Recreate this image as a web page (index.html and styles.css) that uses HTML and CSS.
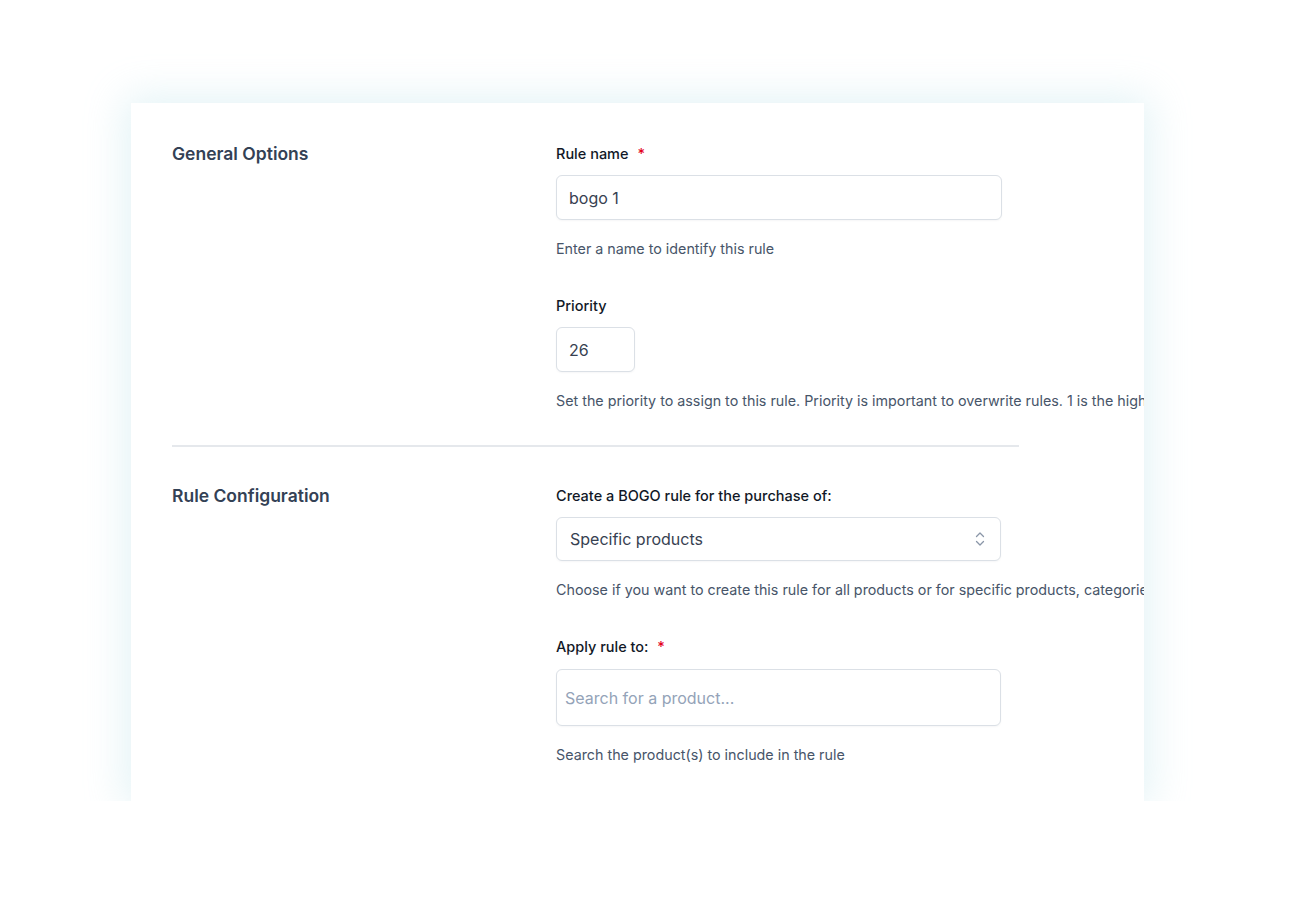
FILE: index.html
```html
<!DOCTYPE html>
<html lang="en">
<head>
<meta charset="utf-8">
<title>BOGO rule</title>
<link rel="stylesheet" href="styles.css">
</head>
<body>
<div class="card">
  <div class="inner">
    <section class="section">
      <h2 class="section-title">General Options</h2>
      <div class="fields">
        <div class="field">
          <label class="label">Rule name <span class="req">*</span></label>
          <div class="input input-wide"><span class="value">bogo 1</span></div>
          <p class="help">Enter a name to identify this rule</p>
        </div>
        <div class="field">
          <label class="label">Priority</label>
          <div class="input input-small"><span class="value">26</span></div>
          <p class="help">Set the priority to assign to this rule. Priority is important to overwrite rules. 1 is the highest priority.</p>
        </div>
      </div>
    </section>
    <hr class="divider">
    <section class="section">
      <h2 class="section-title">Rule Configuration</h2>
      <div class="fields">
        <div class="field">
          <label class="label">Create a BOGO rule for the purchase of:</label>
          <div class="input input-select">
            <span class="value">Specific products</span>
            <svg class="chev" width="10" height="16" viewBox="0 0 10 16" fill="none" stroke="#8a96a8" stroke-width="1.3" stroke-linecap="round" stroke-linejoin="round"><path d="M1.5 5.5 L5 2 L8.5 5.5"/><path d="M1.5 10.5 L5 14 L8.5 10.5"/></svg>
          </div>
          <p class="help">Choose if you want to create this rule for all products or for specific products, categories or tags.</p>
        </div>
        <div class="field">
          <label class="label">Apply rule to: <span class="req">*</span></label>
          <div class="input input-search"><span class="placeholder">Search for a product...</span></div>
          <p class="help">Search the product(s) to include in the rule</p>
        </div>
      </div>
    </section>
  </div>
</div>
</body>
</html>
```

FILE: styles.css
```css
* { box-sizing: border-box; }
html, body { margin: 0; padding: 0; background: #ffffff; }
body {
  font-family: Inter, "Noto Sans", "Liberation Sans", sans-serif;
  padding: 103px 0 0 131px;
}
.card {
  width: 1013px;
  background: #ffffff;
  overflow: hidden;
  padding: 41px 0 36px 41px;
  box-shadow: 0 0 38px 6px rgba(170, 218, 228, 0.33);
}
.inner { width: 847px; }
.section {
  display: grid;
  grid-template-columns: 384px 1fr;
}
.section-title {
  margin: 0;
  font-size: 17.5px;
  line-height: 20px;
  font-weight: 560;
  color: #334155;
}
.fields { display: flex; flex-direction: column; gap: 37px; }
.field { display: flex; flex-direction: column; align-items: flex-start; }
.label {
  font-size: 14.5px;
  line-height: 20px;
  font-weight: 470;
  color: #111827;
}
.req { color: #e3001b; margin-left: 5px; }
.input {
  margin-top: 11px;
  border: 1px solid #dbe0e6;
  border-radius: 6px;
  background: #fff;
  display: flex;
  align-items: center;
  padding: 0 12px;
  font-size: 16px;
  color: #374151;
  box-shadow: 0 1px 2px rgba(15, 23, 42, 0.04);
}
.input-wide { width: 446px; height: 45px; }
.input-small { width: 79px; height: 45px; }
.input-select { width: 445px; height: 44px; padding: 0 13px; justify-content: space-between; }
.input-search { width: 445px; height: 57px; margin-top: 12px; padding: 0 8px; }
.placeholder { color: #94a3b8; }
.chev { margin-right: 2px; }
.help {
  margin: 19px 0 0;
  font-size: 14.3px;
  line-height: 20px;
  color: #475569;
  white-space: nowrap;
}
.divider {
  border: 0;
  height: 2px;
  background: #e5e8ec;
  margin: 34px 0 39px;
}
```
